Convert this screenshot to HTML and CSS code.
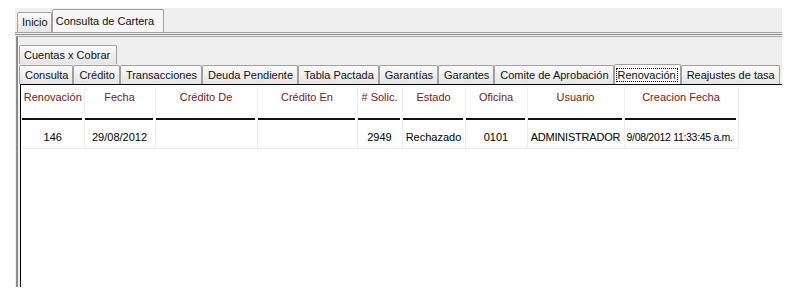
FILE: index.html
```html
<!DOCTYPE html>
<html lang="es">
<head>
    <meta charset="UTF-8">
    <title>Consulta de Cartera</title>
    <link rel="stylesheet" href="styles.css">
</head>
<body>
    <div class="app">
        <!-- Pestañas principales -->
        <div class="tabs outer-tabs">
            <div class="tab">Inicio</div>
            <div class="tab active">Consulta de Cartera</div>
        </div>
        <div class="rule"></div>

        <div class="frame">
            <div class="tabs group-tabs">
                <div class="tab">Cuentas x Cobrar</div>
            </div>
            <div class="tabs detail-tabs">
                <div class="tab">Consulta</div>
                <div class="tab">Crédito</div>
                <div class="tab">Transacciones</div>
                <div class="tab">Deuda Pendiente</div>
                <div class="tab">Tabla Pactada</div>
                <div class="tab">Garantías</div>
                <div class="tab">Garantes</div>
                <div class="tab">Comite de Aprobación</div>
                <div class="tab active"><span class="focus">Renovación</span></div>
                <div class="tab">Reajustes de tasa</div>
            </div>

            <!-- Grilla de renovaciones -->
            <div class="grid">
                <table>
                    <colgroup>
                        <col class="c-renov">
                        <col class="c-fecha">
                        <col class="c-de">
                        <col class="c-en">
                        <col class="c-solic">
                        <col class="c-estado">
                        <col class="c-oficina">
                        <col class="c-usuario">
                        <col class="c-creacion">
                    </colgroup>
                    <thead>
                        <tr>
                            <th>Renovación</th>
                            <th>Fecha</th>
                            <th>Crédito De</th>
                            <th>Crédito En</th>
                            <th># Solic.</th>
                            <th>Estado</th>
                            <th>Oficina</th>
                            <th>Usuario</th>
                            <th>Creacion Fecha</th>
                        </tr>
                    </thead>
                    <tbody>
                        <tr>
                            <td>146</td>
                            <td>29/08/2012</td>
                            <td></td>
                            <td></td>
                            <td>2949</td>
                            <td>Rechazado</td>
                            <td>0101</td>
                            <td class="narrow">ADMINISTRADOR</td>
                            <td class="stamp">9/08/2012 11:33:45 a.m.</td>
                        </tr>
                    </tbody>
                </table>
            </div>
        </div>
    </div>
</body>
</html>
```

FILE: styles.css
```css
body {
    margin: 0;
    background-color: #fff;
    font-family: 'Liberation Sans', Arial, sans-serif;
    font-size: 11px;
    color: #000;
}
.app {
    margin: 8px 0 0 15px;
    width: 767px;
    height: 279px;
    background-color: #efefef;
    display: flex;
    flex-direction: column;
}
.tabs {
    display: flex;
    align-items: flex-end;
}
.tab {
    padding: 0 4px 0 5px;
    border: 1px solid #a0a0a0;
    border-bottom: none;
    border-radius: 2px 2px 0 0;
    background: linear-gradient(#fbfbfb, #e4e4e4);
    white-space: nowrap;
    line-height: 18px;
    color: #111;
}
.outer-tabs {
    height: 24px;
    padding-left: 2px;
}
.outer-tabs .tab {
    line-height: 19px;
    padding: 0 3px 0 4px;
}
.outer-tabs .tab.active {
    line-height: 23px;
    padding: 0 9px 0 3px;
    margin-bottom: -1px;
    background: #f6f6f6;
}
.rule {
    height: 1px;
    border-top: 1px solid #a4a4a4;
    border-bottom: 1px solid #8a8a8a;
}
.frame {
    flex: 1;
    margin: 1px 0 0 1px;
    border-top: 1px solid #a8a8a8;
    border-left: 2px solid #8c8c8c;
    padding: 8px 0 0 1px;
    display: flex;
    flex-direction: column;
}
.group-tabs .tab {
    padding: 0 6px 0 4px;
}
.detail-tabs .tab.active {
    line-height: 20px;
    margin-bottom: -1px;
    background: #fbfbfb;
    padding: 0 3px 0 2px;
}
.focus {
    outline: 1px dotted #000;
    padding: 0 1px;
}
.grid {
    flex: 1;
    margin-left: 1px;
    border-top: 1px solid #000;
    border-left: 1px solid #000;
    background-color: #fff;
    padding-left: 1px;
}
table {
    border-collapse: collapse;
    table-layout: fixed;
    width: 716px;
}
.c-renov { width: 62px; }
.c-fecha { width: 71px; }
.c-de { width: 102px; }
.c-en { width: 100px; }
.c-solic { width: 45px; }
.c-estado { width: 63px; }
.c-oficina { width: 62px; }
.c-usuario { width: 97px; }
.c-creacion { width: 114px; }
th {
    height: 35px;
    padding: 6px 0 0;
    vertical-align: top;
    font-weight: normal;
    color: #75201c;
    text-align: center;
    white-space: nowrap;
    border-right: 1px solid #f0f0f0;
    background: linear-gradient(#111, #111) no-repeat left bottom / calc(100% - 2px) 2px;
    box-sizing: border-box;
}
td {
    height: 23px;
    padding: 5px 0 0;
    text-align: center;
    white-space: nowrap;
    overflow: hidden;
    border-right: 1px solid #ececec;
    border-bottom: 1px solid #ececec;
}
td.narrow {
    letter-spacing: -0.2px;
}
td.stamp {
    text-align: left;
    padding-left: 2px;
    font-size: 10.5px;
    letter-spacing: -0.3px;
}
```
